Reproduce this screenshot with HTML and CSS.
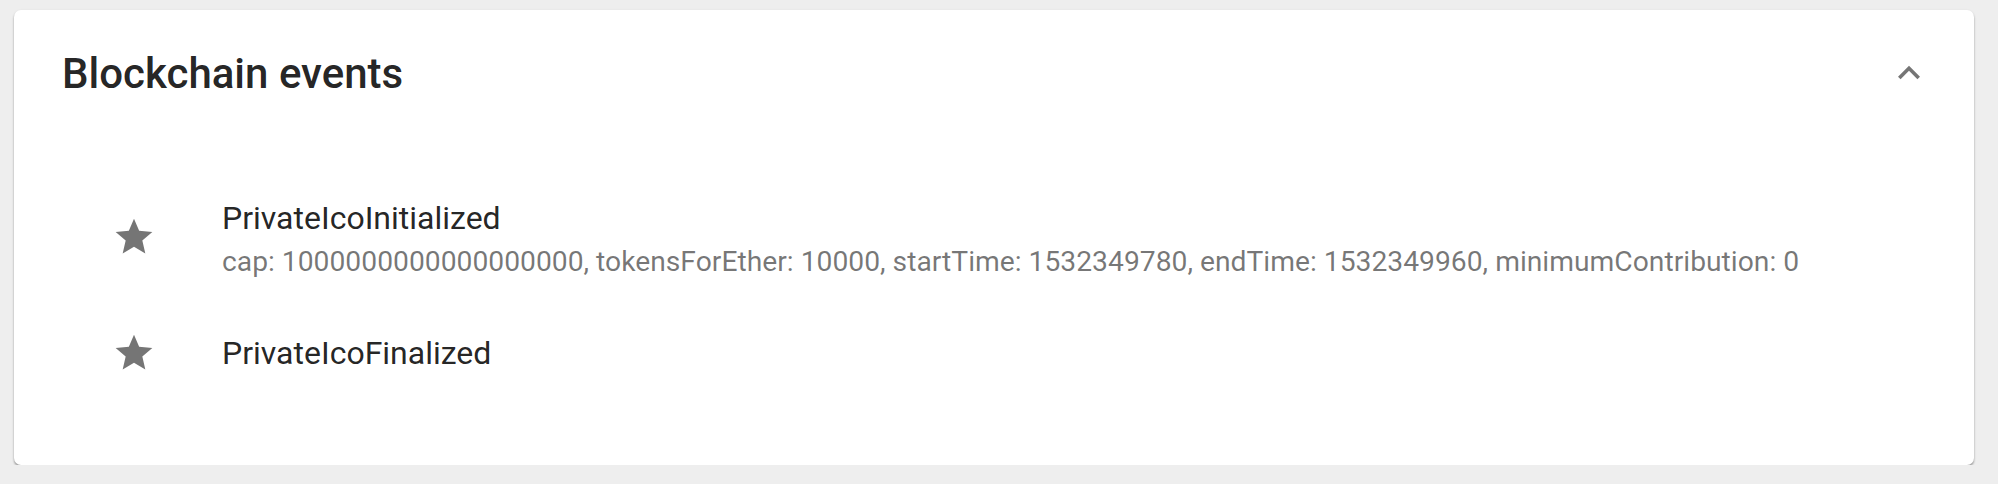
FILE: index.html
```html
<!DOCTYPE html>
<html>
<head>
<meta charset="utf-8">
<link rel="stylesheet" href="styles.css">
</head>
<body>
<div class="page">
  <section class="card">
    <header class="card-header">
      <h2 class="title">Blockchain events</h2>
      <svg class="chevron" viewBox="0 0 24 24"><path d="M12 8l-6 6 1.41 1.41L12 10.83l4.59 4.58L18 14z"/></svg>
    </header>
    <ul class="events">
      <li class="event">
        <svg class="star" viewBox="0 0 24 24"><path d="M12 17.27L18.18 21l-1.64-7.03L22 9.24l-7.19-.61L12 2 9.19 8.63 2 9.24l5.46 4.73L5.82 21z"/></svg>
        <div class="event-text two-line">
          <div class="primary">PrivateIcoInitialized</div>
          <div class="secondary">cap: 1000000000000000000, tokensForEther: 10000, startTime: 1532349780, endTime: 1532349960, minimumContribution: 0</div>
        </div>
      </li>
      <li class="event">
        <svg class="star" viewBox="0 0 24 24"><path d="M12 17.27L18.18 21l-1.64-7.03L22 9.24l-7.19-.61L12 2 9.19 8.63 2 9.24l5.46 4.73L5.82 21z"/></svg>
        <div class="event-text">
          <div class="primary">PrivateIcoFinalized</div>
        </div>
      </li>
    </ul>
  </section>
</div>
</body>
</html>
```

FILE: styles.css
```css
html, body {
  margin: 0;
  padding: 0;
  background: #eeeeee;
  font-family: Roboto, "Liberation Sans", sans-serif;
}
.page {
  padding: 10px 24px 0 14px;
}
.card {
  background: #fff;
  border-radius: 7px;
  height: 455px;
  box-sizing: border-box;
  box-shadow: 0 2px 2px rgba(0,0,0,0.28), 0 1px 3px rgba(0,0,0,0.12);
}
.card-header {
  height: 118px;
  display: flex;
  align-items: center;
  padding: 8px 43px 0 48px;
  box-sizing: border-box;
}
.title {
  flex: 1;
  margin: 0;
  font-size: 42px;
  font-weight: 500;
  color: rgba(0,0,0,0.87);
  letter-spacing: 0;
}
.chevron {
  width: 44px;
  height: 44px;
  fill: rgba(0,0,0,0.54);
}
.events {
  list-style: none;
  margin: 0;
  padding: 51px 0 0 0;
}
.event {
  height: 116px;
  display: flex;
  align-items: center;
  padding-left: 98px;
}
.star {
  width: 44px;
  height: 44px;
  fill: #757575;
  flex: none;
  margin-right: 66px;
}
.two-line {
  padding-top: 4px;
}
.primary {
  font-size: 32px;
  line-height: 44px;
  color: rgba(0,0,0,0.87);
}
.secondary {
  margin-top: 2.5px;
  font-size: 28.25px;
  line-height: 40px;
  color: rgba(0,0,0,0.54);
}
```
